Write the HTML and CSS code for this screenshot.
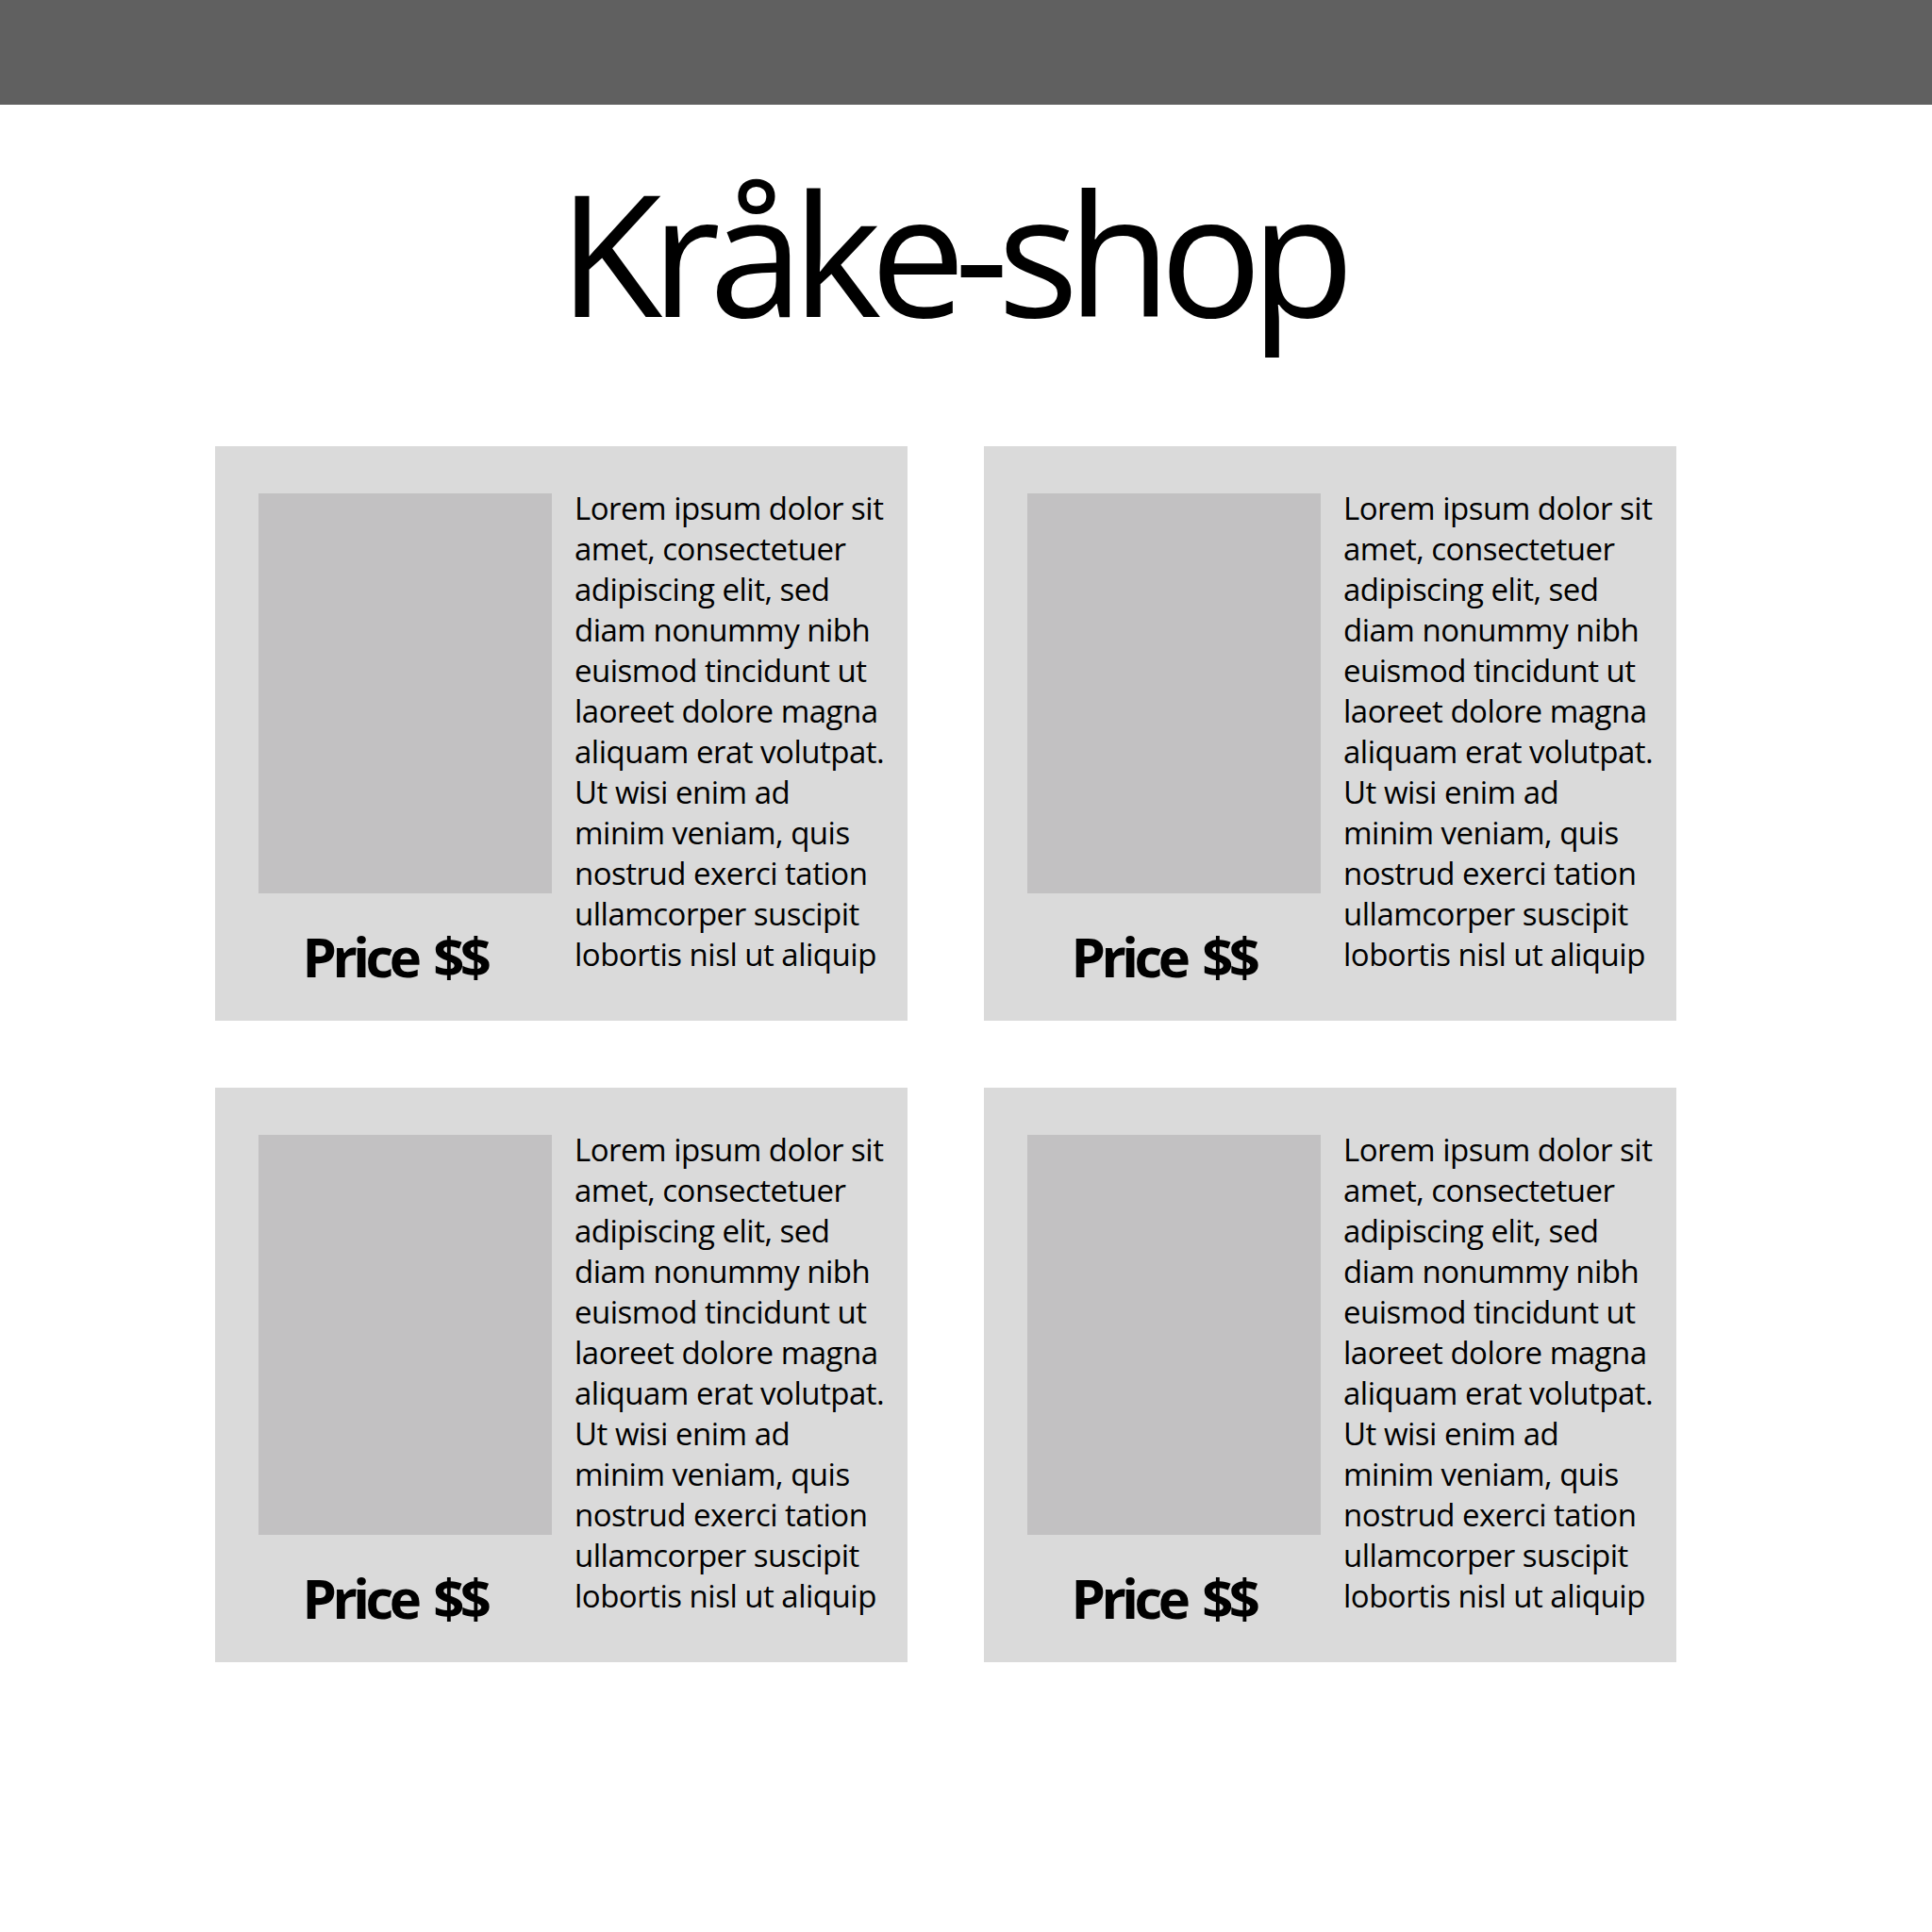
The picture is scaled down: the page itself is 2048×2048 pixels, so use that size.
FILE: index.html
```html
<!DOCTYPE html>
<html lang="no">
<head>
<meta charset="utf-8">
<title>Kråke-shop</title>
<link rel="stylesheet" href="styles.css">
</head>
<body>
<header class="topbar"></header>
<h1 class="title">Kråke-shop</h1>
<main class="grid">
  <article class="card">
    <div class="media">
      <div class="photo"></div>
      <div class="price">Price $$</div>
    </div>
    <p class="desc">Lorem ipsum dolor sit<br>amet, consectetuer<br>adipiscing elit, sed<br>diam nonummy nibh<br>euismod tincidunt ut<br>laoreet dolore magna<br>aliquam erat volutpat.<br>Ut wisi enim ad<br>minim veniam, quis<br>nostrud exerci tation<br>ullamcorper suscipit<br>lobortis nisl ut aliquip</p>
  </article>
  <article class="card">
    <div class="media">
      <div class="photo"></div>
      <div class="price">Price $$</div>
    </div>
    <p class="desc">Lorem ipsum dolor sit<br>amet, consectetuer<br>adipiscing elit, sed<br>diam nonummy nibh<br>euismod tincidunt ut<br>laoreet dolore magna<br>aliquam erat volutpat.<br>Ut wisi enim ad<br>minim veniam, quis<br>nostrud exerci tation<br>ullamcorper suscipit<br>lobortis nisl ut aliquip</p>
  </article>
  <article class="card">
    <div class="media">
      <div class="photo"></div>
      <div class="price">Price $$</div>
    </div>
    <p class="desc">Lorem ipsum dolor sit<br>amet, consectetuer<br>adipiscing elit, sed<br>diam nonummy nibh<br>euismod tincidunt ut<br>laoreet dolore magna<br>aliquam erat volutpat.<br>Ut wisi enim ad<br>minim veniam, quis<br>nostrud exerci tation<br>ullamcorper suscipit<br>lobortis nisl ut aliquip</p>
  </article>
  <article class="card">
    <div class="media">
      <div class="photo"></div>
      <div class="price">Price $$</div>
    </div>
    <p class="desc">Lorem ipsum dolor sit<br>amet, consectetuer<br>adipiscing elit, sed<br>diam nonummy nibh<br>euismod tincidunt ut<br>laoreet dolore magna<br>aliquam erat volutpat.<br>Ut wisi enim ad<br>minim veniam, quis<br>nostrud exerci tation<br>ullamcorper suscipit<br>lobortis nisl ut aliquip</p>
  </article>
</main>
</body>
</html>
```

FILE: styles.css
```css
* { box-sizing: border-box; }

html, body {
  margin: 0;
  padding: 0;
  background: #ffffff;
  font-family: "Open Sans", "Noto Sans", sans-serif;
  color: #000000;
}

.topbar {
  height: 111px;
  background: #606060;
}

.title {
  margin: 66px 0 0 0;
  padding-right: 32px;
  text-align: center;
  font-family: "Open Sans", "Noto Sans", sans-serif;
  font-weight: 400;
  font-size: 180px;
  line-height: 180px;
  letter-spacing: -12px;
}

.grid {
  display: grid;
  grid-template-columns: 734px 734px;
  column-gap: 81px;
  row-gap: 71px;
  margin: 116px 0 0 228px;
}

.card {
  height: 609px;
  background: #dadada;
  display: flex;
  padding: 44px 0 0 46px;
}

.media {
  width: 311px;
  display: flex;
  flex-direction: column;
  align-items: center;
  padding-top: 6px;
}

.photo {
  width: 311px;
  height: 424px;
  background: #c2c1c2;
}

.price {
  margin-top: 38px;
  padding-right: 22px;
  font-weight: 700;
  font-size: 58px;
  line-height: 58px;
  letter-spacing: -4.5px;
  word-spacing: 6px;
  white-space: nowrap;
}

.desc {
  margin: 0 0 0 24px;
  font-size: 33px;
  line-height: 43px;
  letter-spacing: -0.5px;
  white-space: nowrap;
}
```
